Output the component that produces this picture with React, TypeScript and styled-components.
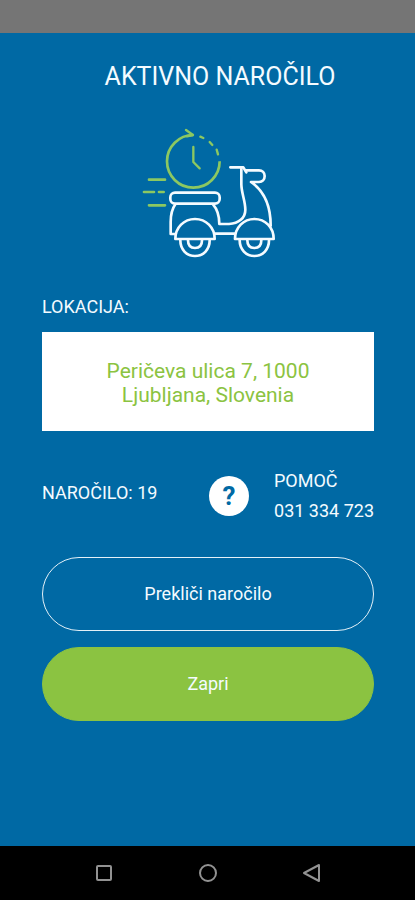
import React from "react";
import styled, { createGlobalStyle, css } from "styled-components";

const BLUE = "#0069a4";
const GREEN = "#8bc341";

const GlobalStyle = createGlobalStyle`
  *, *::before, *::after { box-sizing: border-box; }
  body {
    margin: 0;
    background: ${BLUE};
    color: #f4fbff;
    font-family: Roboto, "Liberation Sans", sans-serif;
  }
  button { font: inherit; }
`;

const Screen = styled.div`
  display: flex;
  flex-direction: column;
  min-height: 100vh;
`;

const StatusBar = styled.div`
  height: 33px;
  background: #757575;
`;

const Content = styled.main`
  flex: 1;
  display: flex;
  flex-direction: column;
  padding: 28px 41px 24px 42px;
`;

const Title = styled.h1`
  margin: 0;
  padding-left: 24px;
  font-size: 25px;
  line-height: 32px;
  font-weight: 400;
  text-align: center;
`;

const Scooter = styled.svg`
  align-self: center;
  margin-top: 27px;
  margin-left: 4px;
  width: 160px;
  height: 150px;
  fill: none;
  stroke: #f4fbff;
  stroke-width: 8;
  stroke-linecap: round;
  stroke-linejoin: round;
`;

const Label = styled.h2`
  margin: 0;
  padding-top: 24px;
  font-size: 18px;
  line-height: 26px;
  font-weight: 400;
`;

const Address = styled.address`
  margin-top: 12px;
  padding: 27px 56px 24px;
  background: #fff;
  color: ${GREEN};
  font-size: 21px;
  line-height: 24px;
  font-style: normal;
  text-align: center;
`;

const InfoRow = styled.section`
  display: flex;
  align-items: center;
  margin-top: 35px;
  font-size: 18px;
  line-height: 30px;
`;

const OrderNumber = styled.p`
  flex: 1;
  margin: 0;
  padding-bottom: 6px;
`;

const HelpButton = styled.button`
  display: grid;
  place-items: center;
  width: 40px;
  height: 40px;
  margin-right: 25px;
  padding: 0;
  border: 0;
  border-radius: 50%;
  background: #fff;
  color: ${BLUE};
  font-size: 26px;
  line-height: 40px;
  font-weight: 700;
`;

const Help = styled.div`
  display: flex;
  flex-direction: column;
`;

const Phone = styled.a`
  color: inherit;
  text-decoration: none;
`;

const Actions = styled.div`
  display: flex;
  flex-direction: column;
  gap: 16px;
  margin-top: 31px;
`;

const ActionButton = styled.button<{ $filled?: boolean }>`
  height: 74px;
  border: 1px solid #e4f1f8;
  border-radius: 37px;
  background: transparent;
  color: #f4fbff;
  font-size: 18px;
  line-height: 24px;
  ${({ $filled }) =>
    $filled &&
    css`
      border-color: ${GREEN};
      background: ${GREEN};
    `}
`;

const NavBar = styled.nav`
  display: flex;
  justify-content: center;
  align-items: center;
  gap: 80px;
  height: 54px;
  background: #000;
`;

const NavButton = styled.button`
  display: grid;
  padding: 0;
  border: 0;
  background: none;
`;

const NavIcon = styled.svg`
  width: 24px;
  height: 24px;
  fill: none;
  stroke: #929292;
  stroke-width: 2;
  stroke-linejoin: round;
`;

function ScooterDrawing() {
  return (
    <Scooter viewBox="0 0 480 450" aria-hidden="true">
      <g stroke="#8cc861">
        <path d="M190 45 A79 79 0 1 0 269 124" strokeLinecap="butt" />
        <path d="M168 30L189 45L171 49" strokeWidth="7" />
        <path d="M211 50L220 54M239 66L247 75M260 89L264 103" strokeWidth="7" />
        <path d="M190 81V126L209 145" strokeWidth="7" />
        <path d="M57 179H105M42 216H72M87 216H101M57 256H105" strokeWidth="8" />
      </g>
      <rect x="121" y="218" width="148" height="33" rx="14" />
      <path d="M136 253C126 267 122 286 122 306V342H136" />
      <path d="M249 253C263 269 268 288 268 312H297C326 311 346 294 346 269C346 243 334 218 334 193V142H301" />
      <path d="M334 142H340L349 157" />
      <path d="M347 151H387C397 151 404 158 404 168C404 179 397 186 387 186H363C404 214 422 256 422 317" />
      <path d="M253 341H315" />
      <path d="M136 357C136 322 162 297 195 297C228 297 254 322 254 357Z" />
      <path d="M315 357C315 322 341 297 373 297C406 297 431 322 431 357Z" />
      <path d="M151 361C151 388 169 408 195 408C221 408 239 388 239 361" />
      <path d="M329 361C329 388 348 408 373 408C399 408 417 388 417 361" />
      <path d="M174 361C174 376 182 384 195 384C208 384 216 376 216 361" />
      <path d="M352 361C352 376 360 384 373 384C386 384 394 376 394 361" />
    </Scooter>
  );
}

export default function App() {
  return (
    <>
      <GlobalStyle />
      <Screen>
        <StatusBar />
        <Content>
          <Title>AKTIVNO NAROČILO</Title>
          <ScooterDrawing />
          <Label>LOKACIJA:</Label>
          <Address>Peričeva ulica 7, 1000 Ljubljana, Slovenia</Address>
          <InfoRow>
            <OrderNumber>NAROČILO: 19</OrderNumber>
            <HelpButton type="button" aria-describedby="help-label">?</HelpButton>
            <Help>
              <span id="help-label">POMOČ</span>
              <Phone href="tel:031334723">031 334 723</Phone>
            </Help>
          </InfoRow>
          <Actions>
            <ActionButton type="button">Prekliči naročilo</ActionButton>
            <ActionButton type="button" $filled>Zapri</ActionButton>
          </Actions>
        </Content>
        <NavBar>
          <NavButton type="button" aria-label="Pregled">
            <NavIcon viewBox="0 0 24 24"><rect x="5" y="5" width="14" height="14" rx="1" /></NavIcon>
          </NavButton>
          <NavButton type="button" aria-label="Domov">
            <NavIcon viewBox="0 0 24 24"><circle cx="12" cy="12" r="8" /></NavIcon>
          </NavButton>
          <NavButton type="button" aria-label="Nazaj">
            <NavIcon viewBox="0 0 24 24"><path d="M19 4V20L4 12Z" /></NavIcon>
          </NavButton>
        </NavBar>
      </Screen>
    </>
  );
}
